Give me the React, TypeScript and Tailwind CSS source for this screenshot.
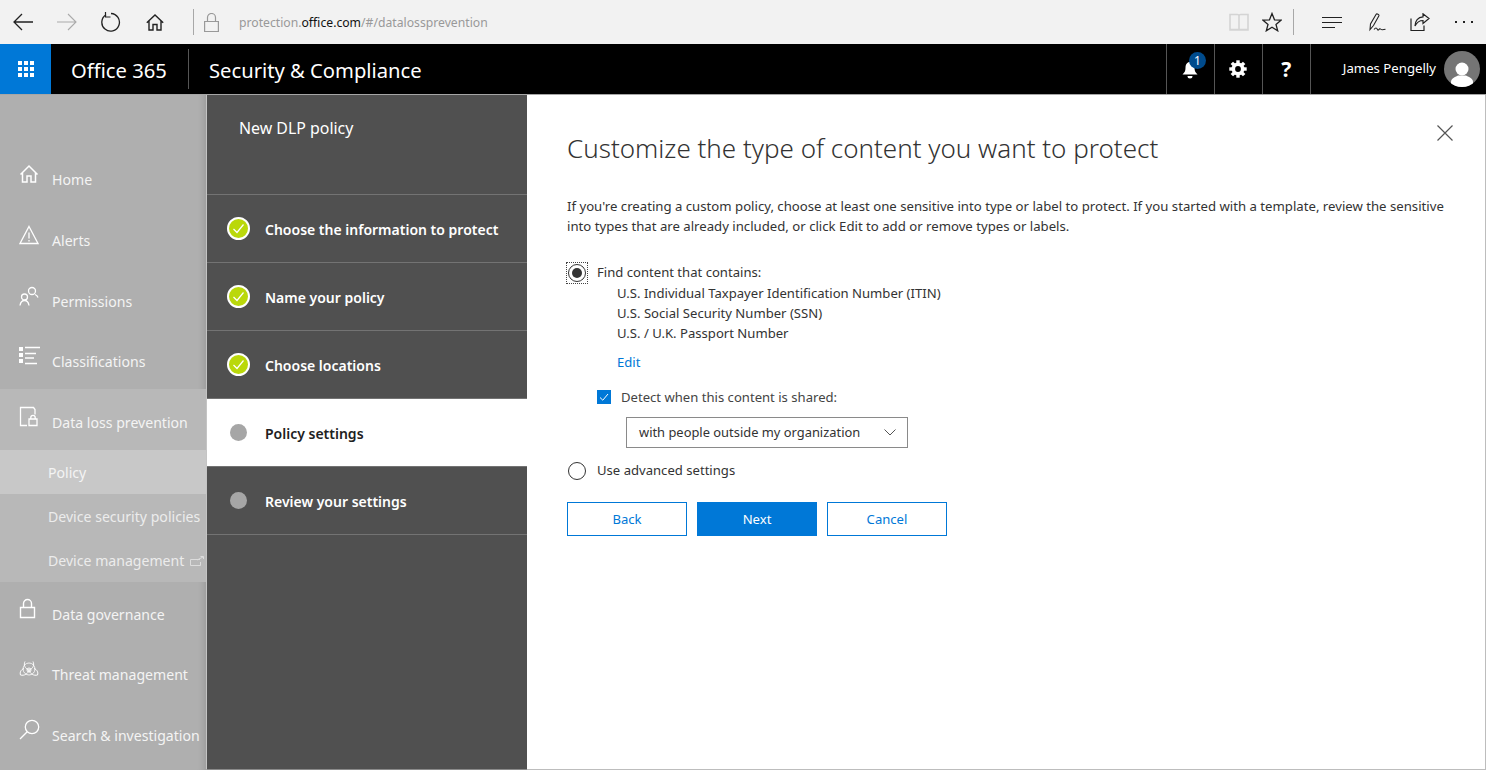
import React from 'react';

const Stroke: React.FC<{ w: number; h: number; vb?: string; sw?: number; className?: string; children: React.ReactNode }> = ({ w, h, vb, sw = 1, className, children }) => (
  <svg width={w} height={h} viewBox={vb ?? `0 0 ${w} ${h}`} fill="none" stroke="currentColor" strokeWidth={sw} className={className}>
    {children}
  </svg>
);

const navTop = [
  {
    label: 'Home',
    rowClass: 'h-[61px]',
    icon: (
      <Stroke w={20} h={20}>
        <path d="M1.500 10.500 10 2l8.500 8.500M3.500 9v9h4.500v-6h4v6h4.500V9" strokeWidth={1.500} />
      </Stroke>
    ),
  },
  {
    label: 'Alerts',
    rowClass: 'h-[61px]',
    icon: (
      <Stroke w={20} h={20}>
        <path d="M10 1.500 19 18.500H1Z M10 7.500v6 M10 15v1.500" strokeWidth={1.300} />
      </Stroke>
    ),
  },
  {
    label: 'Permissions',
    rowClass: 'h-[61px]',
    icon: (
      <Stroke w={20} h={20}>
        <circle cx="13" cy="5" r="3.500" strokeWidth={1.300} />
        <circle cx="5.500" cy="11" r="3" strokeWidth={1.300} />
        <path d="M1 19.500c.5-3 2-5 4.500-5s4 2 4.500 5M16 8.500c1.500.5 2.500 1.500 3 3" strokeWidth={1.300} />
      </Stroke>
    ),
  },
  {
    label: 'Classifications',
    rowClass: 'h-[60px]',
    icon: (
      <Stroke w={21} h={20}>
        <path d="M0 1h4v4H0zM0 7h4v4H0zM0 13h4v4H0z" fill="currentColor" stroke="none" />
        <path d="M6 1.500h15M6 7.500h11M6 12h9M6 17.500h12" strokeWidth={1.300} />
      </Stroke>
    ),
  },
];

const navBottom = [
  {
    label: 'Data governance',
    rowClass: 'h-[59px]',
    icon: (
      <Stroke w={18} h={21}>
        <path d="M1.500 9.500h14v10h-14zM4.500 9.500V5.500a4 4 0 0 1 8 0v4" strokeWidth={1.400} />
      </Stroke>
    ),
  },
  {
    label: 'Threat management',
    rowClass: 'h-[61px]',
    icon: (
      <Stroke w={20} h={20}>
        <circle cx="10" cy="11" r="2" />
        <path d="M6 2.500c-1.500 3-.5 7 4 8.500 4.500-1.500 5.500-5.500 4-8.500M10 11c-1 4-5 6-8.500 5-1-2.500.5-5.500 3.500-6.500M10 11c1 4 5 6 8.500 5 1-2.500-.5-5.500-3.500-6.500" />
        <circle cx="10" cy="10" r="6" strokeWidth={0.800} />
      </Stroke>
    ),
  },
  {
    label: 'Search & investigation',
    rowClass: 'h-[61px]',
    icon: (
      <Stroke w={21} h={21}>
        <circle cx="13" cy="8" r="6.700" strokeWidth={1.300} />
        <path d="M8.200 12.800 1 20" strokeWidth={1.300} />
      </Stroke>
    ),
  },
];

const NavRow: React.FC<{ label: string; icon: React.ReactNode; className?: string }> = ({ label, icon, className }) => (
  <div className={`flex shrink-0 items-center text-white ${className ?? ''}`}>
    <div className="ml-[19px] flex h-[20px] w-[33px] -translate-y-[3px] items-center">{icon}</div>
    <span className="translate-y-[2.500px] whitespace-nowrap text-[14.100px] text-[#f4f4f4]">{label}</span>
  </div>
);

const SubRow: React.FC<{ label: string; active?: boolean; children?: React.ReactNode }> = ({ label, active, children }) => (
  <div className={`flex h-[44px] items-center pl-[48px] text-[14.100px] ${active ? 'bg-[#c8c8c8] text-[#f4f4f4]' : 'text-[#ececec]'}`}>
    <span className="translate-y-[1px] whitespace-nowrap">{label}</span>
    {children}
  </div>
);

const Check = () => (
  <div className="flex h-[23px] w-[23px] items-center justify-center rounded-full border-2 border-white bg-[#bad80a]">
    <svg width="13" height="13" viewBox="0 0 13 13" fill="none" stroke="white" strokeWidth="1.200">
      <path d="M1.500 7 5 10.500 11.500 2.500" />
    </svg>
  </div>
);

const steps = [
  { label: 'Choose the information to protect', done: true },
  { label: 'Name your policy', done: true },
  { label: 'Choose locations', done: true },
  { label: 'Policy settings', active: true },
  { label: 'Review your settings' },
];

const TopIcons = {
  back: (
    <Stroke w={20} h={18}>
      <path d="M20 9H1M9 1 1 9l8 8" strokeWidth={1.300} />
    </Stroke>
  ),
  forward: (
    <Stroke w={20} h={18}>
      <path d="M0 9h19M11 1l8 8-8 8" strokeWidth={1.100} />
    </Stroke>
  ),
  refresh: (
    <Stroke w={20} h={20}>
      <path d="M5 2.800a8.800 8.800 0 1 0 5-1.300" strokeWidth={1.300} />
      <path d="M4.500 0v5h5" strokeWidth={1.200} />
    </Stroke>
  ),
  home: (
    <Stroke w={18} h={17}>
      <path d="M.800 8.800 9 1l8.200 7.800M3 7v9h4v-5.500h4V16h4V7" strokeWidth={1.400} />
    </Stroke>
  ),
};

export default function App() {
  return (
    <div className="flex h-[770px] w-[1486px] flex-col overflow-hidden bg-white font-['Noto_Sans',sans-serif] text-[14px]">
      {/* browser chrome */}
      <div className="flex h-[44px] shrink-0 items-center bg-[#f2f2f2]">
        <div className="ml-[13px] flex w-[20px] justify-center text-[#222]">{TopIcons.back}</div>
        <div className="ml-[24px] flex w-[20px] justify-center text-[#aaa]">{TopIcons.forward}</div>
        <div className="ml-[24px] flex w-[20px] justify-center text-[#222]">{TopIcons.refresh}</div>
        <div className="ml-[25px] flex w-[18px] justify-center text-[#222]">{TopIcons.home}</div>
        <div className="ml-[29px] h-[26px] w-px bg-[#a8a8a8]" />
        <div className="ml-[10px] text-[#999]">
          <Stroke w={15} h={19}>
            <path d="M.600 8.500h13.800v10H.600zM3.500 8.500V4.500a4 4 0 0 1 8 0v4" strokeWidth={1.200} />
          </Stroke>
        </div>
        <div className="ml-[20px] translate-y-[1px] whitespace-nowrap text-[12.200px] text-[#999]">
          protection.<span className="text-[#111]">office.com</span>/#/datalossprevention
        </div>
        <div className="ml-auto flex items-center">
          <div className="text-[#d4d4d4]">
            <Stroke w={20} h={18}>
              <path d="M1 1.500h7.500c.8 0 1.500.6 1.500 1.500v14H1zM19 1.500h-7.500c-.8 0-1.500.6-1.500 1.500v14h9zM1 16.500h18" strokeWidth={1.600} />
            </Stroke>
          </div>
          <div className="ml-[13px] text-[#222]">
            <Stroke w={20} h={20}>
              <path d="M10 1.500 12.500 7.800 19 8.200l-5 4.200 1.700 6.400-5.700-3.500-5.700 3.500L6 12.400 1 8.200l6.500-.4Z" strokeWidth={1.300} />
            </Stroke>
          </div>
          <div className="ml-[11px] h-[26px] w-px bg-[#a8a8a8]" />
          <div className="ml-[28px] text-[#222]">
            <Stroke w={20} h={13}>
              <path d="M0 1.500h20M0 6.500h20M0 11.500h13" strokeWidth={1.200} />
            </Stroke>
          </div>
          <div className="ml-[26px] text-[#222]">
            <Stroke w={18} h={19}>
              <path d="M2 16.500 2.500 11 8 1.500c.8-1.300 3.500 0 2.800 1.500L5.500 12.500Z" strokeWidth={1.100} />
              <path d="M6 16.500c1.500-2 2.500-2 3.500 0s2-1.800 3-.5 2.500 1 5 .3" strokeWidth={1.100} />
            </Stroke>
          </div>
          <div className="ml-[24px] text-[#222]">
            <Stroke w={20} h={18}>
              <path d="M1 5.500v12h13v-5" strokeWidth={1.200} />
              <path d="M19 5.500 13 .8v3C8 4 5 8 5 13c2-4 4-5.500 8-5.500v3z" strokeWidth={1.200} />
            </Stroke>
          </div>
          <div className="ml-[25px] mr-[13px] flex gap-[6px]">
            <span className="h-[2px] w-[2px] bg-[#222]" />
            <span className="h-[2px] w-[2px] bg-[#222]" />
            <span className="h-[2px] w-[2px] bg-[#222]" />
          </div>
        </div>
      </div>

      {/* suite bar */}
      <div className="flex h-[50px] shrink-0 items-center bg-black text-white">
        <div className="flex h-full w-[51px] items-center justify-center bg-[#0078d7]">
          <div className="grid grid-cols-3 gap-[2px]">
            {Array.from({ length: 9 }).map((_, i) => (
              <span key={i} className="h-[4px] w-[4px] bg-white" />
            ))}
          </div>
        </div>
        <div className="ml-[20px] w-[97px] translate-y-[1px] whitespace-nowrap text-[20.200px] leading-none">Office 365</div>
        <div className="ml-[20px] h-[40px] w-px bg-[#555]" />
        <div className="ml-[20px] translate-y-[1px] whitespace-nowrap text-[20.200px] leading-none">Security &amp; Compliance</div>
        <div className="ml-auto flex h-full items-center">
          <div className="relative flex h-full w-[48px] items-center justify-center border-l border-[#555]">
            <svg width="16" height="18" viewBox="0 0 16 18" fill="white" className="mt-[1px]">
              <path d="M8 1c3 0 4.500 2.500 4.500 6 0 3 1 4.500 3 6.500H.5c2-2 3-3.500 3-6.500C3.500 3.500 5 1 8 1ZM5.500 15h5a2.500 2.500 0 0 1-5 0Z" />
            </svg>
            <span className="absolute left-[22px] top-[8px] flex h-[17px] w-[17px] items-center justify-center rounded-full bg-[#004b8c] text-[12px] leading-none text-white">1</span>
          </div>
          <div className="flex h-full w-[48px] items-center justify-center border-l border-[#555]">
            <svg width="18" height="18" viewBox="0 0 18 18">
              <circle cx="9" cy="9" r="4.700" fill="none" stroke="white" strokeWidth="3.600" />
              {[0, 45, 90, 135, 180, 225, 270, 315].map((a) => (
                <rect key={a} x="7.300" y="0.300" width="3.400" height="3.500" fill="white" transform={`rotate(${a} 9 9)`} />
              ))}
            </svg>
          </div>
          <div className="flex h-full w-[48px] items-center justify-center border-l border-[#555] text-[21px] font-bold leading-none">?</div>
          <div className="flex h-full items-center border-l border-[#555] pr-[6px]">
            <span className="ml-[32px] whitespace-nowrap text-[13.200px]">James Pengelly</span>
            <div className="ml-[8px] flex h-[36px] w-[36px] items-end justify-center overflow-hidden rounded-full bg-[#757575]">
              <svg width="24" height="28" viewBox="0 0 24 28" fill="white">
                <circle cx="12" cy="10" r="6.500" />
                <path d="M1 28v-5c0-4 5-5.500 7-6.500h8c2 1 7 2.500 7 6.500v5z" />
              </svg>
            </div>
          </div>
        </div>
      </div>

      <div className="h-px shrink-0 bg-[#a6a6a6]" />

      {/* body */}
      <div className="flex min-h-0 flex-1">
        <nav className="flex w-[206px] shrink-0 flex-col bg-[#afafaf] pt-[51px] shadow-[inset_-8px_0_6px_-6px_rgba(0,0,0,0.12)]">
          {navTop.map((n) => (
            <NavRow key={n.label} label={n.label} icon={n.icon} className={n.rowClass} />
          ))}
          <NavRow
            label="Data loss prevention"
            className="h-[61px] bg-[#b8b8b8]"
            icon={
              <Stroke w={19} h={21}>
                <path d="M8 19.500H1.500V1.500h13l1.500 2v5" strokeWidth={1.300} />
                <path d="M10 13h8v6.500h-8zM11.800 13v-1.500a2.200 2.200 0 0 1 4.400 0V13" strokeWidth={1.300} />
              </Stroke>
            }
          />
          <div className="bg-[#b8b8b8]">
            <SubRow label="Policy" active />
            <SubRow label="Device security policies" />
            <SubRow label="Device management">
              <svg width="14" height="10" viewBox="0 0 14 10" fill="none" stroke="#dcdcdc" className="ml-[6px] mt-[2px] shrink-0">
                <path d="M10 3.500H.5v6h10V6M7 4l6-3M10.500.5H13.500V3" />
              </svg>
            </SubRow>
          </div>
          {navBottom.map((n) => (
            <NavRow key={n.label} label={n.label} icon={n.icon} className={n.rowClass} />
          ))}
        </nav>

        <aside className="flex w-[321px] shrink-0 flex-col border-b border-l border-b-[#8a8a8a] border-l-[#c4c4c4] bg-[#505050]">
          <div className="flex h-[99px] shrink-0 items-start pl-[32px] pt-[21px] text-[15.900px] leading-[24px] text-white">New DLP policy</div>
          <div className="border-t border-[#737373]">
            {steps.map((s) => (
              <div
                key={s.label}
                className={`flex h-[68px] items-center border-b pl-[20px] ${s.active ? 'border-[#737373] bg-white text-[#212121]' : 'border-[#737373] text-white'}`}
              >
                <div className="flex w-[23px] justify-center">
                  {s.done ? <Check /> : <span className="h-[17px] w-[17px] rounded-full bg-[#a6a6a6]" />}
                </div>
                <span className="ml-[15px] translate-y-[1px] whitespace-nowrap text-[14px] font-semibold">{s.label}</span>
              </div>
            ))}
          </div>
        </aside>

        <main className="relative min-w-0 flex-1 border-r border-b border-[#bdbdbd] pl-[40px] text-[#333]">
          <button className="absolute right-[32px] top-[30px] text-[#555]">
            <Stroke w={16} h={16}>
              <path d="M.5.500l15 15M15.500.500l-15 15" strokeWidth={1.200} />
            </Stroke>
          </button>
          <h1 className="whitespace-nowrap pt-[33px] text-[26px] font-light leading-[40px] text-[#333]">Customize the type of content you want to protect</h1>
          <p className="mt-[28px] w-[890px] text-[13.180px] leading-[20px] text-[#333]">
            If you're creating a custom policy, choose at least one sensitive into type or label to protect. If you started with a template, review the sensitive into types that are already included, or click Edit to add or remove types or labels.
          </p>

          <div className="mt-[27px] flex h-[20px] items-center">
            <div className="flex h-[22px] w-[22px] -translate-x-[1px] items-center justify-center border border-dotted border-[#444]">
              <span className="flex h-[18px] w-[18px] items-center justify-center rounded-full border-[1.500px] border-[#333]">
                <span className="h-[10px] w-[10px] rounded-full bg-[#333]" />
              </span>
            </div>
            <span className="ml-[8px] text-[13.100px]">Find content that contains:</span>
          </div>
          <ul className="ml-[50px] text-[13.100px] leading-[20px]">
            <li>U.S. Individual Taxpayer Identification Number (ITIN)</li>
            <li>U.S. Social Security Number (SSN)</li>
            <li>U.S. / U.K. Passport Number</li>
          </ul>
          <a className="ml-[50px] mt-[9px] block text-[13.100px] leading-[20px] text-[#0078d7]">Edit</a>

          <div className="ml-[30px] mt-[16px] flex h-[20px] items-center">
            <span className="flex h-[14px] w-[14px] -translate-y-[1px] items-center justify-center bg-[#0078d7]">
              <svg width="10" height="10" viewBox="0 0 10 10" fill="none" stroke="white" strokeWidth="1">
                <path d="M1 5.500 3.800 8.200 9 2" />
              </svg>
            </span>
            <span className="ml-[10px] text-[13.100px] text-[#444]">Detect when this content is shared:</span>
          </div>

          <div className="ml-[59px] mt-[9px] flex h-[31px] w-[282px] items-center justify-between border border-[#8a8a8a] pl-[12px] pr-[11px] text-[12.900px]">
            <span>with people outside my organization</span>
            <svg width="12" height="7" viewBox="0 0 12 7" fill="none" stroke="#555">
              <path d="M.5.500 6 6 11.500.500" />
            </svg>
          </div>

          <div className="mt-[13px] flex h-[20px] items-center">
            <span className="ml-[1px] h-[18px] w-[18px] rounded-full border-[1.500px] border-[#333]" />
            <span className="ml-[11px] text-[13.100px]">Use advanced settings</span>
          </div>

          <div className="mt-[21px] flex gap-[10px] text-[13.100px]">
            <button className="h-[34px] w-[120px] border border-[#0078d7] pt-[1px] text-[#0078d7]">Back</button>
            <button className="h-[34px] w-[120px] bg-[#0078d7] pt-[1px] text-white">Next</button>
            <button className="h-[34px] w-[120px] border border-[#0078d7] pt-[1px] text-[#0078d7]">Cancel</button>
          </div>
        </main>
      </div>
    </div>
  );
}
